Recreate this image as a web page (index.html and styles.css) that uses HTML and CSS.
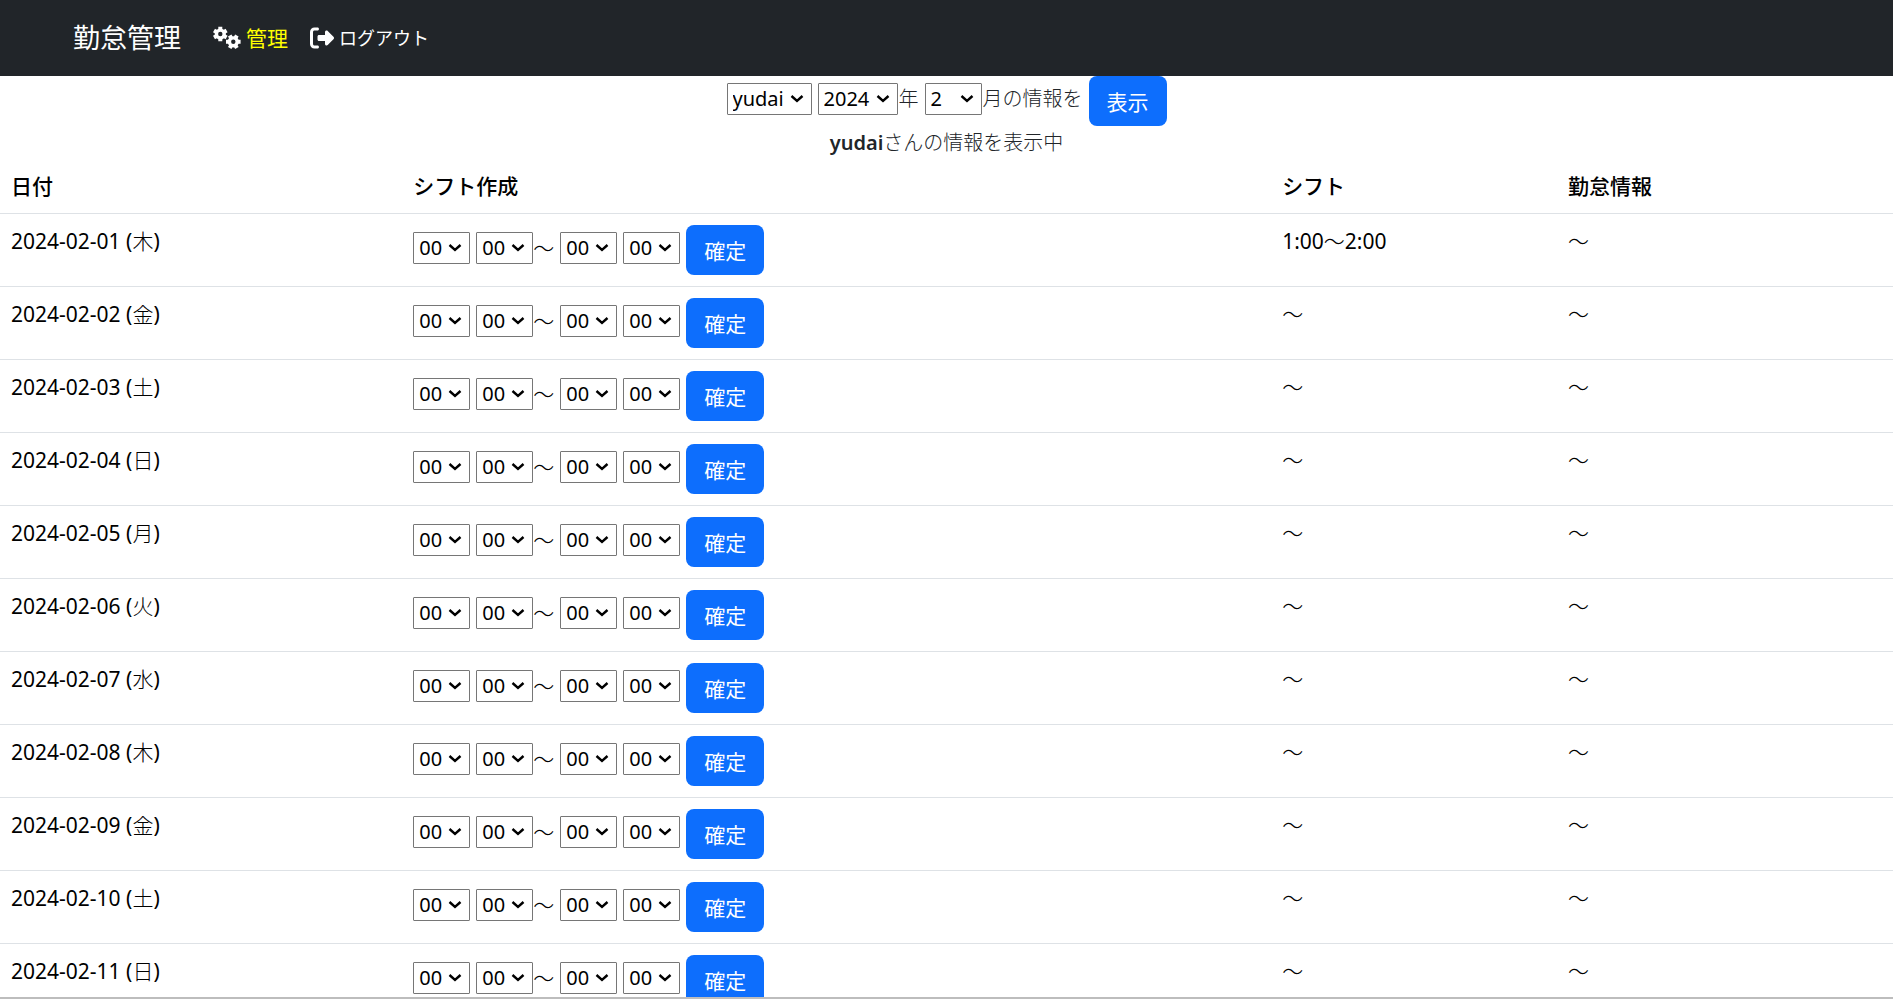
FILE: index.html
```html
<!DOCTYPE html>
<html lang="ja">
<head>
<meta charset="utf-8">
<title>勤怠管理</title>
<link rel="stylesheet" href="styles.css">
</head>
<body>
<header class="navbar">
  <a class="brand" href="#">勤怠管理</a>
  <nav class="nav">
    <a class="nav-link active" href="#">
      <svg class="icon-gears" viewBox="0 0 28 24" aria-hidden="true">
        <g fill="none" stroke="#fff">
          <circle cx="7.3" cy="8" r="3.9" stroke-width="3.4"/>
          <path stroke-width="4" d="M7.3 .7v3M7.3 12.3v3M1 4.4l2.6 1.5M11 10.1l2.6 1.5M1 11.6l2.6-1.5M11 5.9l2.6-1.5"/>
          <circle cx="20.3" cy="15.8" r="3.9" stroke-width="3.4"/>
          <path stroke-width="4" d="M13 15.8h3M24.6 15.8h3M16.7 9.5l1.5 2.6M22.4 19.5l1.5 2.6M23.9 9.5l-1.5 2.6M18.2 19.5l-1.5 2.6"/>
        </g>
      </svg>
      <span>管理</span>
    </a>
    <a class="nav-link" href="#">
      <svg class="icon-logout" viewBox="0 0 512 512" aria-hidden="true"><path fill="#fff" d="M377.9 105.9L500.7 228.7c7.2 7.2 11.3 17.1 11.3 27.3s-4.1 20.1-11.3 27.3L377.9 406.1c-6.4 6.4-15 9.9-24 9.9c-18.7 0-33.9-15.2-33.9-33.9l0-62.1-128 0c-17.7 0-32-14.3-32-32l0-64c0-17.7 14.3-32 32-32l128 0 0-62.1c0-18.7 15.2-33.9 33.9-33.9c9 0 17.6 3.6 24 9.9zM160 96L96 96c-17.7 0-32 14.3-32 32l0 256c0 17.7 14.3 32 32 32l64 0c17.7 0 32 14.3 32 32s-14.3 32-32 32l-64 0c-53 0-96-43-96-96L0 128C0 75 43 32 96 32l64 0c17.7 0 32 14.3 32 32s-14.3 32-32 32z"/></svg>
      <span class="kana">ログアウト</span>
    </a>
  </nav>
</header>
<main class="content">
  <form class="filter">
    <select class="select user" aria-label="ユーザー"><option>yudai</option></select>
    <span class="unit"><select class="select year" id="year"><option>2024</option></select><label for="year">年</label></span>
    <span class="unit"><select class="select" id="month"><option>2</option></select><label for="month">月の情報を</label></span>
    <button class="btn" type="button">表示</button>
  </form>
  <p class="message"><strong>yudai</strong>さんの情報を表示中</p>
  <table class="table">
    <thead>
      <tr><th class="col-date">日付</th><th class="col-form">シフト作成</th><th class="col-shift">シフト</th><th>勤怠情報</th></tr>
    </thead>
    <tbody id="days"></tbody>
  </table>
</main>
<script src="script.js"></script>
</body>
</html>
```

FILE: script.js
```js
const weekdays = ["日", "月", "火", "水", "木", "金", "土"];
const tilde = `<span class="light">～</span>`;
const shifts = { 1: `1:00${tilde}2:00` };
const select = (label) =>
  `<select class="select" aria-label="${label}"><option>00</option></select>`;

const rows = [];
for (let day = 1; day <= 11; day++) {
  const weekday = weekdays[new Date(2024, 1, day).getDay()];
  rows.push(`<tr>
    <td>2024-02-${String(day).padStart(2, "0")} (<span class="light">${weekday}</span>)</td>
    <td><form class="shift-form">
      ${select("開始時")}
      <span class="unit">${select("開始分")}<span class="tilde">～</span></span>
      ${select("終了時")}
      ${select("終了分")}
      <button class="btn" type="button">確定</button>
    </form></td>
    <td>${shifts[day] || tilde}</td>
    <td>${tilde}</td>
  </tr>`);
}
document.getElementById("days").innerHTML = rows.join("");
```

FILE: styles.css
```css
* {
  box-sizing: border-box;
}

body {
  margin: 0;
  height: 100vh;
  display: flex;
  flex-direction: column;
  overflow: hidden;
  border-bottom: 2px solid #bdbdbd;
  background: #fff;
  color: #212529;
  font-family: "Noto Sans", "Noto Sans CJK JP", sans-serif;
  font-size: 21px;
  line-height: 32px;
}

.navbar {
  flex: none;
  display: flex;
  align-items: center;
  gap: 32px;
  height: 76px;
  padding: 0 73px;
  background: #212529;
}

.brand {
  color: #fff;
  font-size: 27px;
  text-decoration: none;
}

.nav {
  display: flex;
  gap: 22px;
}

.nav-link {
  display: flex;
  align-items: center;
  gap: 5px;
  color: #fff;
  text-decoration: none;
}

.nav-link.active {
  color: #ff0;
}

.kana {
  font-size: 18px;
}

.icon-gears {
  width: 28px;
  height: 24px;
}

.icon-logout {
  width: 24px;
  height: 24px;
}

.content {
  flex: 1;
  min-height: 0;
  overflow: hidden;
}

.light,
.message,
.tilde,
.unit label {
  font-weight: 300;
}

.filter,
.shift-form {
  display: flex;
  align-items: center;
  gap: 6px;
}

.filter {
  justify-content: center;
}

.unit {
  display: flex;
  align-items: center;
}

.unit label,
.tilde {
  margin-bottom: 4px;
}

.unit label {
  padding-left: 1px;
  font-size: 20px;
}

.select {
  appearance: none;
  width: 57px;
  height: 32px;
  margin: 0 0 4px;
  padding: 0 0 0 5px;
  border: 1px solid #767676;
  border-radius: 1px;
  background: #fff url("data:image/svg+xml,%3Csvg xmlns='http://www.w3.org/2000/svg' width='14' height='10'%3E%3Cpath d='M1.5 2l5.5 5 5.5-5' fill='none' stroke='%23000' stroke-width='2.4'/%3E%3C/svg%3E") no-repeat right 7px center;
  color: #000;
  font-family: inherit;
  font-size: 20px;
  line-height: 30px;
}

.select.user {
  width: 85px;
}

.select.year {
  width: 80px;
}

.btn {
  height: 50px;
  padding: 0 18px;
  border: 0;
  border-radius: 8px;
  background: #0d6efd;
  color: #fff;
  font-family: inherit;
  font-size: 21px;
}

.message {
  margin: 1px 0 0;
  font-size: 20px;
  text-align: center;
}

.message strong {
  font-weight: 600;
}

.table {
  width: 100%;
  table-layout: fixed;
  border-collapse: collapse;
  color: #000;
}

.table th,
.table td {
  padding: 11px;
  border-bottom: 1px solid #dee2e6;
  text-align: left;
  vertical-align: top;
}

.table th {
  font-weight: 500;
}

.col-date {
  width: 21.25%;
}

.col-form {
  width: 45.9%;
}

.col-shift {
  width: 15.1%;
}
```
